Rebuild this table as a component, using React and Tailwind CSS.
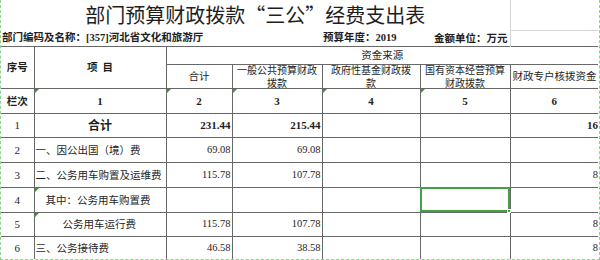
import React from 'react'

const cell = 'border-r border-b border-[#686868] p-0'
const last = 'border-b border-[#686868] p-0'
const num = "font-['Liberation_Serif','Noto_Sans_CJK_SC',serif]"

const Tri = () => (
  <span className="absolute left-0 top-0 h-0 w-0 border-t-[4px] border-r-[4px] border-t-[#2f9e2f] border-r-transparent" />
)

const TwoLine = ({ a, b }) => (
  <div className="flex h-[23px] flex-col items-center justify-center text-[10px] leading-[13px]">
    <span className="whitespace-nowrap">{a}</span>
    <span className="whitespace-nowrap">{b}</span>
  </div>
)

const rows = [
  { no: '1', name: '合计', total: '231.44', general: '215.44', fund: '', state: '', special: '16', bold: true },
  { no: '2', name: '一、因公出国（境）费', total: '69.08', general: '69.08', fund: '', state: '', special: '' },
  { no: '3', name: '二、公务用车购置及运维费', total: '115.78', general: '107.78', fund: '', state: '', special: '8' },
  { no: '4', name: '其中：公务用车购置费', total: '', general: '', fund: '', state: '', special: '', indent: 'pl-[11px]', tri: true, selected: true },
  { no: '5', name: '公务用车运行费', total: '115.78', general: '107.78', fund: '', state: '', special: '8', indent: 'pl-[28px]', tri: true },
  { no: '6', name: '三、公务接待费', total: '46.58', general: '38.58', fund: '', state: '', special: '8' },
]

const heights = ['h-[24px]', 'h-[25px]', 'h-[25px]', 'h-[25px]', 'h-[24px]', 'h-[24px]']

export default function App() {
  return (
    <div className="relative h-[260px] w-[600px] overflow-hidden border-b border-l border-r border-dashed border-[#8fd08f] bg-white font-['Noto_Sans_CJK_SC',sans-serif] text-[#1e1e1e]">
      <table className="w-[597px] table-fixed border-collapse leading-[12px]">
        <colgroup>
          <col className="w-[33px]" />
          <col className="w-[132px]" />
          <col className="w-[66px]" />
          <col className="w-[90px]" />
          <col className="w-[98px]" />
          <col className="w-[90px]" />
          <col className="w-[88px]" />
        </colgroup>
        <tbody>
          <tr className="h-[30px]">
            <td colSpan={6} className="p-0 text-center text-[20px] leading-[30px]">
              部门预算财政拨款“三公”经费支出表
            </td>
            <td className="border-b border-l border-[#d6d6d6] p-0" />
          </tr>
          <tr className="h-[16px] text-[10.5px] font-bold">
            <td colSpan={3} className="whitespace-nowrap p-0 pl-[1px]">
              部门编码及名称：<span className={num}>[357]</span>河北省文化和旅游厅
            </td>
            <td className="p-0" />
            <td className="whitespace-nowrap p-0 pl-[1px]">
              预算年度：<span className={num}>2019</span>
            </td>
            <td className="whitespace-nowrap p-0 pr-[2px] text-right">金额单位：万元</td>
            <td className="border-l border-[#d6d6d6] p-0" />
          </tr>
          <tr className="h-[18px] text-[10.5px]">
            <td rowSpan={2} className={`${cell} border-t text-center font-bold`}>序号</td>
            <td rowSpan={2} className={`${cell} border-t text-center font-bold`}>项&nbsp;&nbsp;目</td>
            <td colSpan={5} className={`${last} border-t text-center`}>资金来源</td>
          </tr>
          <tr className="h-[24px] text-[10.5px]">
            <td className={`${cell} text-center`}>合计</td>
            <td className={cell}><TwoLine a="一般公共预算财政" b="拨款" /></td>
            <td className={cell}><TwoLine a="政府性基金财政拨" b="款" /></td>
            <td className={cell}><TwoLine a="国有资本经营预算" b="财政拨款" /></td>
            <td className={`${last} whitespace-nowrap pl-[2px]`}>财政专户核拨资金</td>
          </tr>
          <tr className="h-[25px] text-[11px] font-bold">
            <td className={`${cell} text-center text-[10.5px]`}>栏次</td>
            {['1', '2', '3', '4', '5'].map(n => (
              <td key={n} className={`${cell} relative text-center ${num}`}>
                <Tri />
                {n}
              </td>
            ))}
            <td className={`${last} text-center ${num}`}>6</td>
          </tr>
          {rows.map((r, i) => (
            <tr key={r.no} className={`${heights[i]} text-[10.5px]`}>
              <td className={`${cell} text-center ${num} text-[11px]`}>{r.no}</td>
              <td
                className={`${cell} relative whitespace-nowrap ${r.bold ? 'text-center text-[12px] font-bold' : r.indent || 'pl-[1px]'}`}
              >
                {r.tri && <Tri />}
                {r.name}
              </td>
              <td className={`${cell} pr-[1px] text-right ${num} ${r.bold ? 'text-[11px] font-bold' : 'text-[10.5px]'}`}>{r.total}</td>
              <td className={`${cell} pr-[1px] text-right ${num} ${r.bold ? 'text-[11px] font-bold' : 'text-[10.5px]'}`}>{r.general}</td>
              <td className={`${cell} text-right ${num}`}>{r.fund}</td>
              <td className={`${cell} relative text-right ${num}`}>
                {r.selected && (
                  <span className="absolute -left-px -top-px bottom-0 right-0 border-2 border-[#3fa33f]">
                    <span className="absolute -bottom-[3px] -right-[3px] h-[4px] w-[4px] border border-white bg-[#3fa33f]" />
                  </span>
                )}
                {r.state}
              </td>
              <td className={`${last} text-right ${num} ${r.bold ? 'text-[11px] font-bold' : 'text-[10.5px]'}`}>{r.special}</td>
            </tr>
          ))}
        </tbody>
      </table>
    </div>
  )
}
